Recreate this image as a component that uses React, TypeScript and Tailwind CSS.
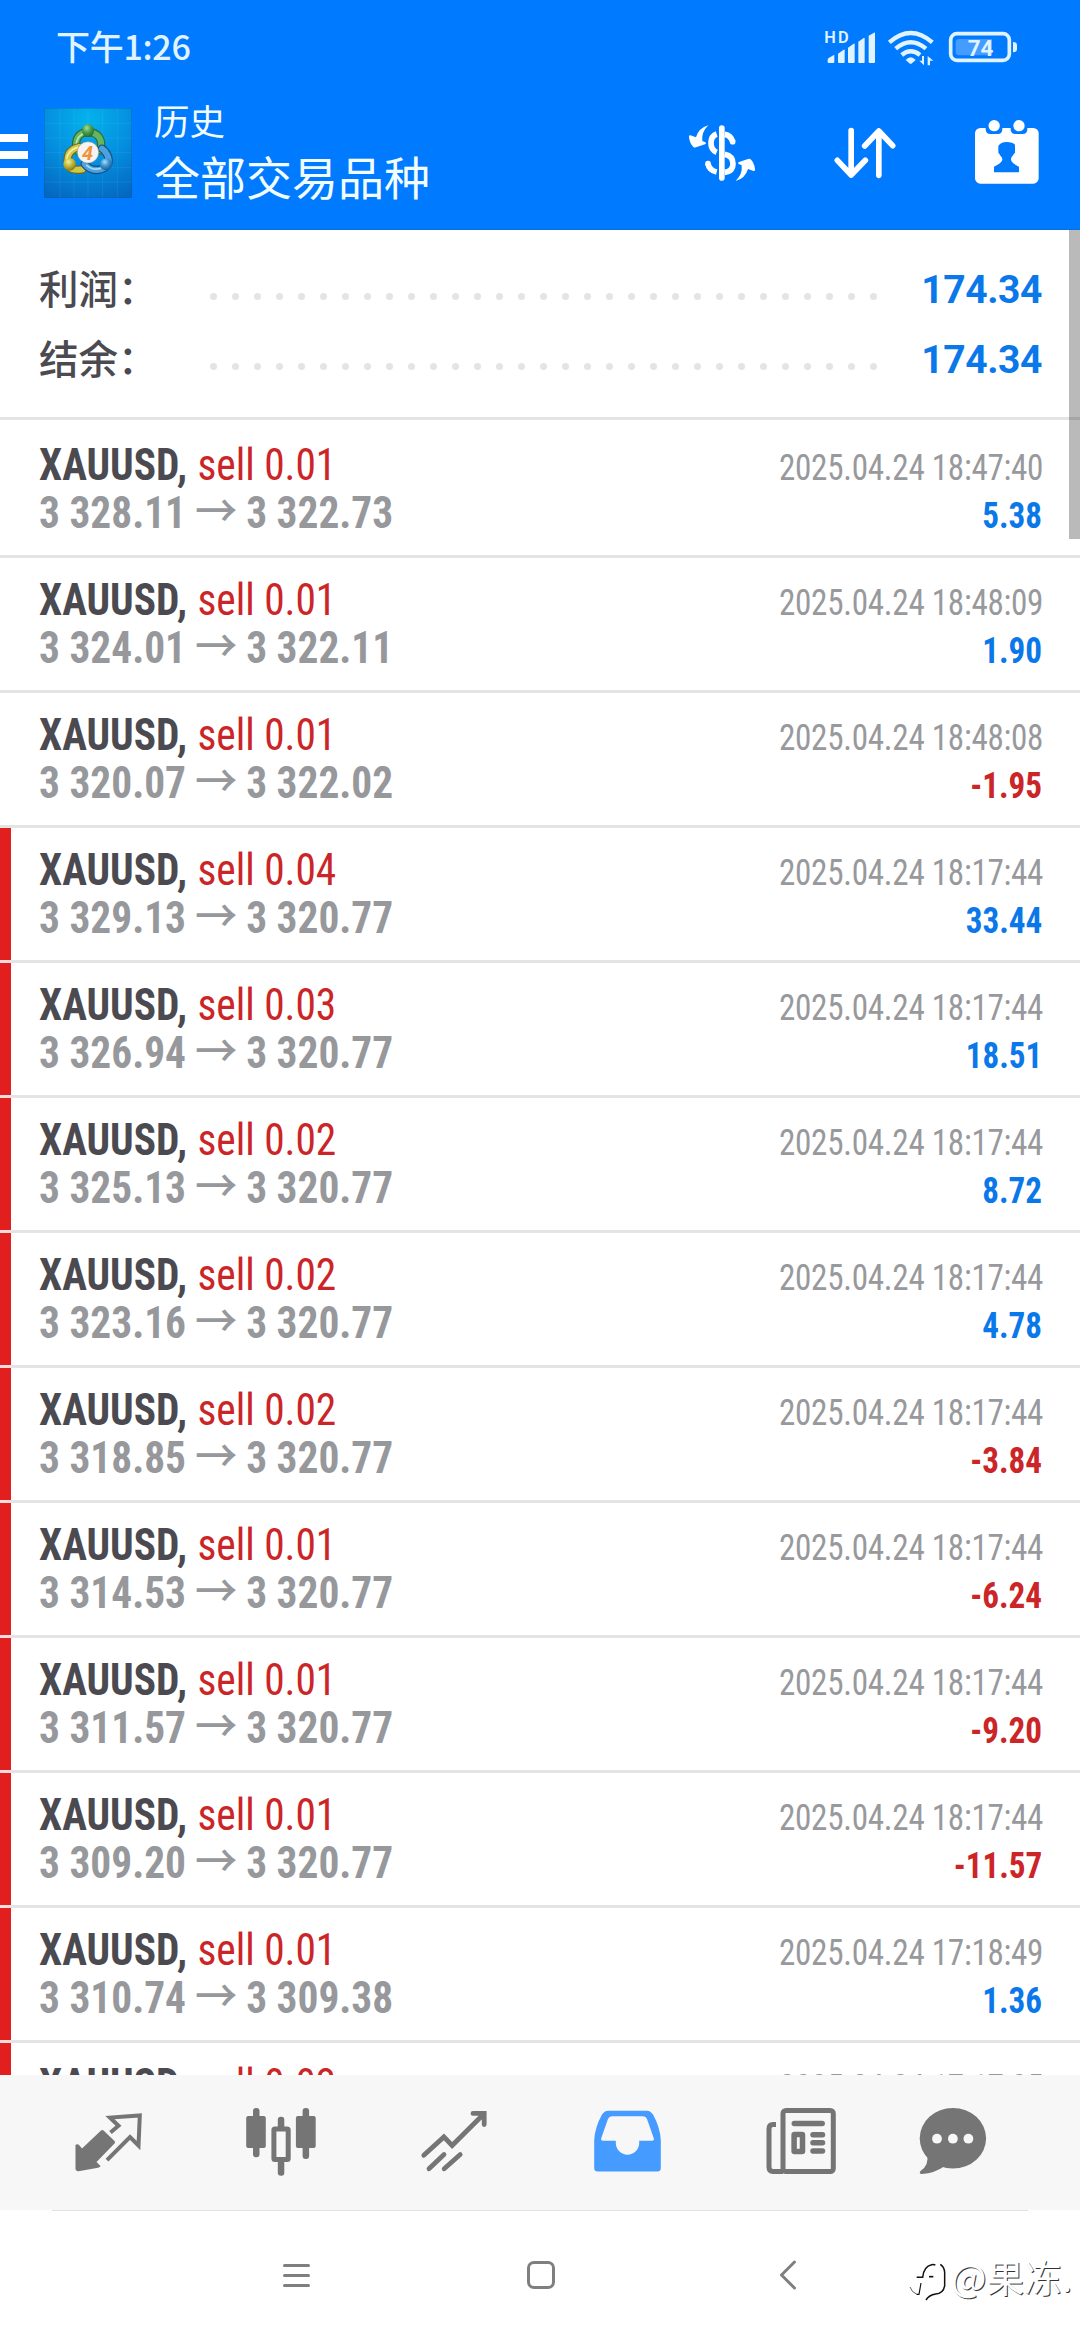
type Deal = {
  lots: string;
  open: string;
  close: string;
  time: string;
  profit: string;
  marked: boolean;
};

const deals: Deal[] = [
  { lots: "0.01", open: "3 328.11", close: "3 322.73", time: "2025.04.24 18:47:40", profit: "5.38", marked: false },
  { lots: "0.01", open: "3 324.01", close: "3 322.11", time: "2025.04.24 18:48:09", profit: "1.90", marked: false },
  { lots: "0.01", open: "3 320.07", close: "3 322.02", time: "2025.04.24 18:48:08", profit: "-1.95", marked: false },
  { lots: "0.04", open: "3 329.13", close: "3 320.77", time: "2025.04.24 18:17:44", profit: "33.44", marked: true },
  { lots: "0.03", open: "3 326.94", close: "3 320.77", time: "2025.04.24 18:17:44", profit: "18.51", marked: true },
  { lots: "0.02", open: "3 325.13", close: "3 320.77", time: "2025.04.24 18:17:44", profit: "8.72", marked: true },
  { lots: "0.02", open: "3 323.16", close: "3 320.77", time: "2025.04.24 18:17:44", profit: "4.78", marked: true },
  { lots: "0.02", open: "3 318.85", close: "3 320.77", time: "2025.04.24 18:17:44", profit: "-3.84", marked: true },
  { lots: "0.01", open: "3 314.53", close: "3 320.77", time: "2025.04.24 18:17:44", profit: "-6.24", marked: true },
  { lots: "0.01", open: "3 311.57", close: "3 320.77", time: "2025.04.24 18:17:44", profit: "-9.20", marked: true },
  { lots: "0.01", open: "3 309.20", close: "3 320.77", time: "2025.04.24 18:17:44", profit: "-11.57", marked: true },
  { lots: "0.01", open: "3 310.74", close: "3 309.38", time: "2025.04.24 17:18:49", profit: "1.36", marked: true },
  { lots: "0.03", open: "", close: "", time: "2025.04.24 17:17:05", profit: "", marked: true },
];

function StatusIcons() {
  return (
    <svg className="h-[38px] w-[197px]" viewBox="549 87 591 114" fill="#e0f3ff">
      <text x="553" y="130" fontSize="49" fontWeight="600" fontFamily="Roboto, sans-serif" textLength="73">HD</text>
      <path d="M563 180 Q563 176 566 174 L583 164 V186 Q583 189 580 189 H566 Q563 189 563 186Z" />
      <path d="M594 161 L611 149 Q614 147 614 151 V186 Q614 189 611 189 H597 Q594 189 594 186Z" />
      <path d="M624 143 L641 131 Q644 129 644 133 V186 Q644 189 641 189 H627 Q624 189 624 186Z" />
      <path d="M655 125 L671 114 Q674 112 674 116 V186 Q674 189 671 189 H658 Q655 189 655 186Z" />
      <path d="M686 107 L702 98 Q705 96 705 100 V186 Q705 189 702 189 H689 Q686 189 686 186Z" />
      <g fill="none" stroke="#e0f3ff" strokeWidth="13">
        <path d="M748 127 Q812 71 877 127" />
        <path d="M767 146 Q812 107 858 146" />
        <path d="M785 165 Q812 143 840 165" />
      </g>
      <path d="M797 180 Q812 163 827 180 L816 190 Q812 193 808 190Z" />
      <path d="M846 168 H852 V196 L838 182 H846Z" />
      <path d="M863 168 L880 182 H870 V196 H863Z" />
      <rect x="932" y="101" width="176" height="80" rx="19" fill="none" stroke="#e0f3ff" strokeWidth="11" />
      <path d="M957 117 H1056 V166 H957 Q947 166 947 156 V127 Q947 117 957 117Z" fill="#459cff" />
      <text x="983" y="168" fontSize="68" fontWeight="700" fontFamily="Roboto, sans-serif" textLength="77" lengthAdjust="spacingAndGlyphs">74</text>
      <path d="M1119 126 Q1131 126 1131 136 V147 Q1131 157 1119 157Z" />
    </svg>
  );
}

function Logo() {
  return (
    <svg className="h-[90px] w-[88px]" viewBox="24 24 264 270">
      <defs>
        <radialGradient id="sky" cx="0.5" cy="0.12" r="0.95">
          <stop offset="0" stopColor="#04b2ec" />
          <stop offset="0.5" stopColor="#0490e0" />
          <stop offset="1" stopColor="#0468c0" />
        </radialGradient>
        <radialGradient id="greenBall" cx="0.4" cy="0.3" r="0.7">
          <stop offset="0" stopColor="#a5dc9a" />
          <stop offset="0.5" stopColor="#4a9f4c" />
          <stop offset="1" stopColor="#226b32" />
        </radialGradient>
        <radialGradient id="yellowBall" cx="0.4" cy="0.3" r="0.7">
          <stop offset="0" stopColor="#f3ee9e" />
          <stop offset="0.5" stopColor="#c2b93a" />
          <stop offset="1" stopColor="#7f7a1c" />
        </radialGradient>
        <radialGradient id="blueBall" cx="0.4" cy="0.3" r="0.7">
          <stop offset="0" stopColor="#a8ddf8" />
          <stop offset="0.5" stopColor="#3c94d0" />
          <stop offset="1" stopColor="#1a5f9a" />
        </radialGradient>
      </defs>
      <rect x="24" y="24" width="264" height="270" fill="url(#sky)" />
      <rect x="25" y="25" width="262" height="268" fill="none" stroke="#0a4f9e" strokeOpacity="0.35" strokeWidth="3" />
      <path d="M72 24V294M114 24V294M156 24V294M200 24V294M244 24V294M24 70H288M24 114H288M24 158H288M24 203H288M24 246H288" stroke="#7fd4ff" strokeOpacity="0.14" strokeWidth="2.5" />
      <g fill="none" strokeLinecap="round">
        <path d="M122 152 Q112 100 156 95 Q204 100 194 152" stroke="#2c6a36" strokeWidth="25" />
        <path d="M122 152 Q112 100 156 95 Q204 100 194 152" stroke="#63b560" strokeWidth="18" />
        <path d="M121 147 Q117 104 154 98" stroke="#b8e3a8" strokeWidth="5" />
        <path d="M140 208 Q98 215 95 190 Q90 150 130 141" stroke="#6b6a1e" strokeWidth="25" />
        <path d="M140 208 Q98 215 95 190 Q90 150 130 141" stroke="#cfc748" strokeWidth="18" />
        <path d="M92 178 Q96 150 124 142" stroke="#f4efa0" strokeWidth="5" />
        <path d="M146 192 Q165 216 195 208 Q228 196 214 165 Q208 152 198 146" stroke="#174f86" strokeWidth="25" />
        <path d="M146 192 Q165 216 195 208 Q228 196 214 165 Q208 152 198 146" stroke="#4aa3dc" strokeWidth="18" />
        <path d="M152 196 Q172 213 194 205" stroke="#a4dcfa" strokeWidth="5" />
      </g>
      <ellipse cx="156" cy="92" rx="18" ry="20" fill="url(#greenBall)" />
      <circle cx="101" cy="193" r="19" fill="url(#yellowBall)" />
      <circle cx="210" cy="193" r="18" fill="url(#blueBall)" />
      <circle cx="156" cy="157" r="32" fill="#f4f4f4" stroke="#8b8f80" strokeWidth="1.5" />
      <text x="138" y="179" fontSize="60" fontWeight="700" fontStyle="italic" fontFamily="Roboto, sans-serif" fill="#f2933a">4</text>
    </svg>
  );
}

function DollarIcon() {
  const arrow = "M205 376 Q176 384 168 412 L151 406 Q146 405 147 412 Q149 430 160 441 Q163 444 168 442 L195 433 Q201 430 196 427 L187 423 Q184 396 205 376Z";
  return (
    <svg className="h-[60px] w-[70px]" viewBox="141 369 210 180" fill="#fff">
      <path d={arrow} />
      <path d={arrow} transform="rotate(180 246 459.5)" />
      <g fill="none" stroke="#fff" strokeWidth="17">
        <path d="M245.5 384V534" strokeLinecap="round" />
        <path d="M230 402 Q213 408 213 430 Q213 450 230 457" />
        <path d="M254 403 Q273 406 278 425" />
        <path d="M254 463 Q279 468 279 492 Q279 514 254 517" />
        <path d="M204 491 Q207 511 230 516" />
      </g>
      <circle cx="278" cy="425" r="8.5" />
      <circle cx="204" cy="491" r="8.5" />
    </svg>
  );
}

function SortIcon() {
  return (
    <svg className="h-[60px] w-[64px]" viewBox="579 369 192 180" fill="none" stroke="#fff" strokeWidth="17" strokeLinecap="round" strokeLinejoin="round">
      <path d="M633.500 392V525M592 481L633.500 525L676 481M716.500 526V393M674 438L716.500 393L758 437" />
    </svg>
  );
}

function CalendarIcon() {
  return (
    <svg className="h-[66px] w-[66px]" viewBox="1002 357 198 198" fill="#fff">
      <rect x="1005" y="384" width="191" height="167" rx="16" />
      <path d="M1037 380 V388 Q1037 402 1051 402 H1073 Q1087 402 1087 388 V380Z M1112 380 V388 Q1112 402 1126 402 H1148 Q1162 402 1162 388 V380Z" fill="#007aff" />
      <circle cx="1062.500" cy="377" r="17" />
      <circle cx="1137" cy="377" r="17" />
      <path d="M1075 438 Q1082 426 1100 426 Q1118 426 1125 434 V458 Q1121 462 1119 466 Q1112 472 1113 480 Q1117 491 1137 500 V517 H1062 V500 Q1083 491 1087 480 Q1088 472 1080 466 Q1079 462 1075 458Z" fill="#007aff" />
    </svg>
  );
}

function DealRow({ deal }: { deal: Deal }) {
  return (
    <li>
      <div className="flex h-[132px]">
        <div className={deal.marked ? "w-[11px] bg-[#e11f1f]" : "w-[11px]"} />
        <div className="flex-1 pt-[18px] pr-[37px] pl-[28px] whitespace-nowrap">
          <div className="flex h-12 items-baseline justify-between leading-[48px]">
            <div className="origin-left scale-x-[0.94] text-[44px]">
              <span className="font-bold text-[#4b4a51]">XAUUSD,</span>
              <span className="ml-[11px] text-[#cb2527]">sell {deal.lots}</span>
            </div>
            <span className="origin-right scale-x-[0.92] text-[36px] tracking-[-0.3px] text-[#98999c]">{deal.time}</span>
          </div>
          {deal.open && (
            <div className="flex h-12 items-baseline justify-between pr-px font-bold leading-[48px]">
              <div className="flex origin-left scale-x-[0.94] items-baseline text-[44px] text-[#97989c]">
                <span>{deal.open}</span>
                <span className="mx-[9.5px] font-['Noto_Sans_CJK_SC'] text-[45px] font-medium leading-[40px]">→</span>
                <span>{deal.close}</span>
              </div>
              <span className={deal.profit.startsWith("-") ? "origin-right scale-x-[0.92] text-[36px] text-[#cb2527]" : "origin-right scale-x-[0.92] text-[36px] text-[#0b78ea]"}>
                {deal.profit}
              </span>
            </div>
          )}
        </div>
      </div>
      <div className="flex h-[3px] bg-[#e4e4e4]">
        <div className={deal.marked ? "w-[11px] bg-[#f7dcdd]" : "w-[11px]"} />
      </div>
    </li>
  );
}

function SummaryRow({ label, value }: { label: string; value: string }) {
  return (
    <div className="flex h-[70px] items-center">
      <span className="mb-[6px] w-[171px] font-['Noto_Sans_CJK_SC'] text-[39.500px] font-medium leading-[60px] text-[#4b4a51]">{label}</span>
      <div className="mt-[12px] flex gap-[15px]">
        {Array.from({ length: 31 }, (_, i) => (
          <span key={i} className="size-[7px] rounded-full bg-[#e4e4e4]" />
        ))}
      </div>
      <span className="ml-auto font-['Roboto',sans-serif] text-[39px] font-bold leading-[70px] tracking-[-0.4px] text-[#0b78ea]">{value}</span>
    </div>
  );
}

function TabBar() {
  return (
    <nav className="flex h-[135px] items-center bg-[#f7f7f7] pb-px pl-[72px] text-[#757575]">
      <svg className="size-[72px]" viewBox="72 2106 72 72">
        <path d="M75.500 2145Q77.500 2143.500 79.500 2145.500L82 2148.500L101 2130.500Q102.300 2129.500 103.500 2130.500L114.500 2141Q115.700 2142.300 114.500 2143.500L96.500 2162L100.500 2166Q100.500 2167.300 98 2167.700L78.500 2171.200Q75.500 2171.200 75.500 2168.500Z" fill="currentColor" />
        <path d="M110.500 2132.500L118.500 2125.700L110 2117.600L139.800 2115.500L138.500 2145.500L130 2137L107 2160.200" fill="none" stroke="currentColor" strokeWidth="4" strokeLinejoin="miter" strokeLinecap="butt" />
      </svg>
      <svg className="ml-[101px] size-[72px]" viewBox="245 2106 72 72" fill="currentColor">
        <rect x="253" y="2108" width="6.500" height="49.300" rx="3" />
        <rect x="246.200" y="2116" width="19.600" height="32" rx="2" />
        <rect x="302.600" y="2108" width="6.500" height="51" rx="3" />
        <rect x="295.900" y="2116" width="19.800" height="32" rx="2" />
        <rect x="277.800" y="2116.700" width="6.500" height="14" rx="3" />
        <rect x="277.800" y="2160" width="6.500" height="15.800" rx="3" />
        <rect x="273.900" y="2129" width="14.300" height="30.600" rx="1" fill="none" stroke="currentColor" strokeWidth="5" />
      </svg>
      <svg className="ml-[101px] size-[72px]" viewBox="418 2106 72 72" fill="none" stroke="currentColor" strokeWidth="4.800" strokeLinecap="round">
        <path d="M423.800 2155.300L443.900 2136.900L452.100 2145.500L483 2114.800M473 2113.400H484.200V2124.500" />
        <path d="M429 2168.800L444 2154.500M444.200 2168.800L460.200 2154.500" />
      </svg>
      <svg className="ml-[101px] size-[72px]" viewBox="591 2106 72 72" fill="#459bff">
        <path fillRule="evenodd" d="M594.200 2140Q595 2127 602 2114.500Q604.500 2110.700 608 2110.700H647Q650.500 2110.700 653 2114.500Q660 2127 660.800 2140V2168Q660.800 2171.500 657.300 2171.500H597.700Q594.200 2171.500 594.200 2168ZM603 2140.700Q600.500 2140.700 601.300 2138L608 2119Q609 2116.300 612 2116.300H643Q646 2116.300 647 2119L653.700 2138Q654.500 2140.700 652 2140.700H639.200V2143A11.700 11.700 0 0 1 615.800 2143V2140.700Z" />
      </svg>
      <svg className="ml-[102px] size-[72px]" viewBox="765 2106 72 72" fill="none" stroke="currentColor" strokeWidth="5">
        <rect x="783" y="2110.500" width="50.300" height="61" rx="3" />
        <path d="M776 2124.500H773Q769 2124.500 769 2129V2167Q769 2171.500 773 2171.500H783" />
        <path d="M794.300 2123.500H822.200M813 2134.700H822.500M813 2142.700H822.500M813 2151H822.500" strokeWidth="5.500" strokeLinecap="round" />
        <rect x="794.100" y="2134.400" width="8.400" height="17.200" rx="0.500" strokeWidth="5.500" />
      </svg>
      <svg className="ml-[80px] size-[72px]" viewBox="917 2106 72 72" fill="currentColor">
        <ellipse cx="952.900" cy="2138.300" rx="33.200" ry="30.300" />
        <path d="M927 2154Q929.500 2165 920.500 2171Q918.500 2174 922 2174Q935 2173 944 2166.500Z" />
        <g fill="#f7f7f7">
          <circle cx="937" cy="2138.700" r="4.900" />
          <circle cx="952.900" cy="2138.700" r="4.900" />
          <circle cx="968.400" cy="2138.700" r="4.900" />
        </g>
      </svg>
    </nav>
  );
}

function Watermark() {
  return (
    <div className="absolute top-[2249px] left-[906px] flex items-center">
      <svg className="mt-[7px] h-[46px] w-[45px]" viewBox="45 60 135 138" fill="none" stroke="#111" strokeLinecap="butt">
        <path d="M57 150Q62 166 78 172" strokeWidth="2" />
        <path d="M77 172H84L90 138" strokeWidth="3.500" />
        <path d="M77 121H95Q98 88 122 83Q128 82 133 84" strokeWidth="4.500" />
        <path d="M114 119H127" strokeWidth="5" />
        <path d="M148 82Q160 90 161 106V146Q157 170 134 171Q114 174 105 189" strokeWidth="4.500" />
      </svg>
      <span className="font-['Noto_Sans_CJK_SC'] text-[37.500px] font-normal leading-[54px] text-white [text-shadow:1px_1px_0_#333]">@果冻.</span>
    </div>
  );
}

export default function App() {
  return (
    <div className="relative flex h-[2340px] w-[1080px] flex-col overflow-hidden bg-white font-['Roboto_Condensed',sans-serif]">
      <header className="flex h-[230px] flex-col border-b border-[#0a6fd8] bg-[#007aff] text-[#f2fdff]">
        <div className="flex h-[80px] items-start justify-between pr-[60px] pl-[56px]">
          <span className="mt-[23px] font-['Noto_Sans_CJK_SC'] text-[34px] font-medium leading-[45px] tracking-[-0.3px] text-[#e0f3ff]">下午1:26</span>
          <div className="mt-[29px]">
            <StatusIcons />
          </div>
        </div>
        <div className="flex h-[146px] items-center">
          <div className="mt-[4px] flex w-[28px] flex-col gap-[9px]">
            <span className="h-[8px] bg-white" />
            <span className="h-[8px] bg-white" />
            <span className="h-[8px] bg-white" />
          </div>
          <div className="ml-[16px]">
            <Logo />
          </div>
          <div className="mb-[6px] ml-[22px] flex flex-col font-['Noto_Sans_CJK_SC'] font-normal">
            <span className="text-[35.500px] leading-[50px]">历史</span>
            <span className="text-[46px] leading-[60px]">全部交易品种</span>
          </div>
          <div className="ml-auto flex items-center pr-[40px]">
            <DollarIcon />
            <div className="ml-[76px]">
              <SortIcon />
            </div>
            <div className="-mt-[2px] ml-[77px]">
              <CalendarIcon />
            </div>
          </div>
        </div>
      </header>

      <section className="h-[190px] border-b-[3px] border-[#e4e4e4] pt-[25px] pr-[38px] pl-[39px]">
        <SummaryRow label="利润：" value="174.34" />
        <SummaryRow label="结余：" value="174.34" />
      </section>

      <ul className="h-[1655px] overflow-hidden pt-[3px]">
        {deals.map((deal, i) => (
          <DealRow key={i} deal={deal} />
        ))}
      </ul>

      <TabBar />

      <footer className="flex-1">
        <div className="mx-[52px] h-px bg-[#e2e2e2]" />
        <div className="flex h-[128px] items-center pl-[283px]">
          <div className="flex w-[27px] flex-col gap-[7px]">
            <span className="h-[3px] rounded-full bg-[#7f7f7f]" />
            <span className="h-[3px] rounded-full bg-[#7f7f7f]" />
            <span className="h-[3px] rounded-full bg-[#7f7f7f]" />
          </div>
          <div className="ml-[217px] size-[28px] rounded-[7px] border-[3px] border-[#7f7f7f]" />
          <svg className="ml-[223px] h-[30px] w-[20px]" viewBox="0 0 20 30" fill="none" stroke="#7f7f7f" strokeWidth="3" strokeLinecap="round" strokeLinejoin="round">
            <path d="M16.500 2L3.500 15L16.500 28" />
          </svg>
        </div>
      </footer>

      <div className="absolute top-[230px] right-0 h-[309px] w-[11px] bg-black/27" />
      <Watermark />
    </div>
  );
}
